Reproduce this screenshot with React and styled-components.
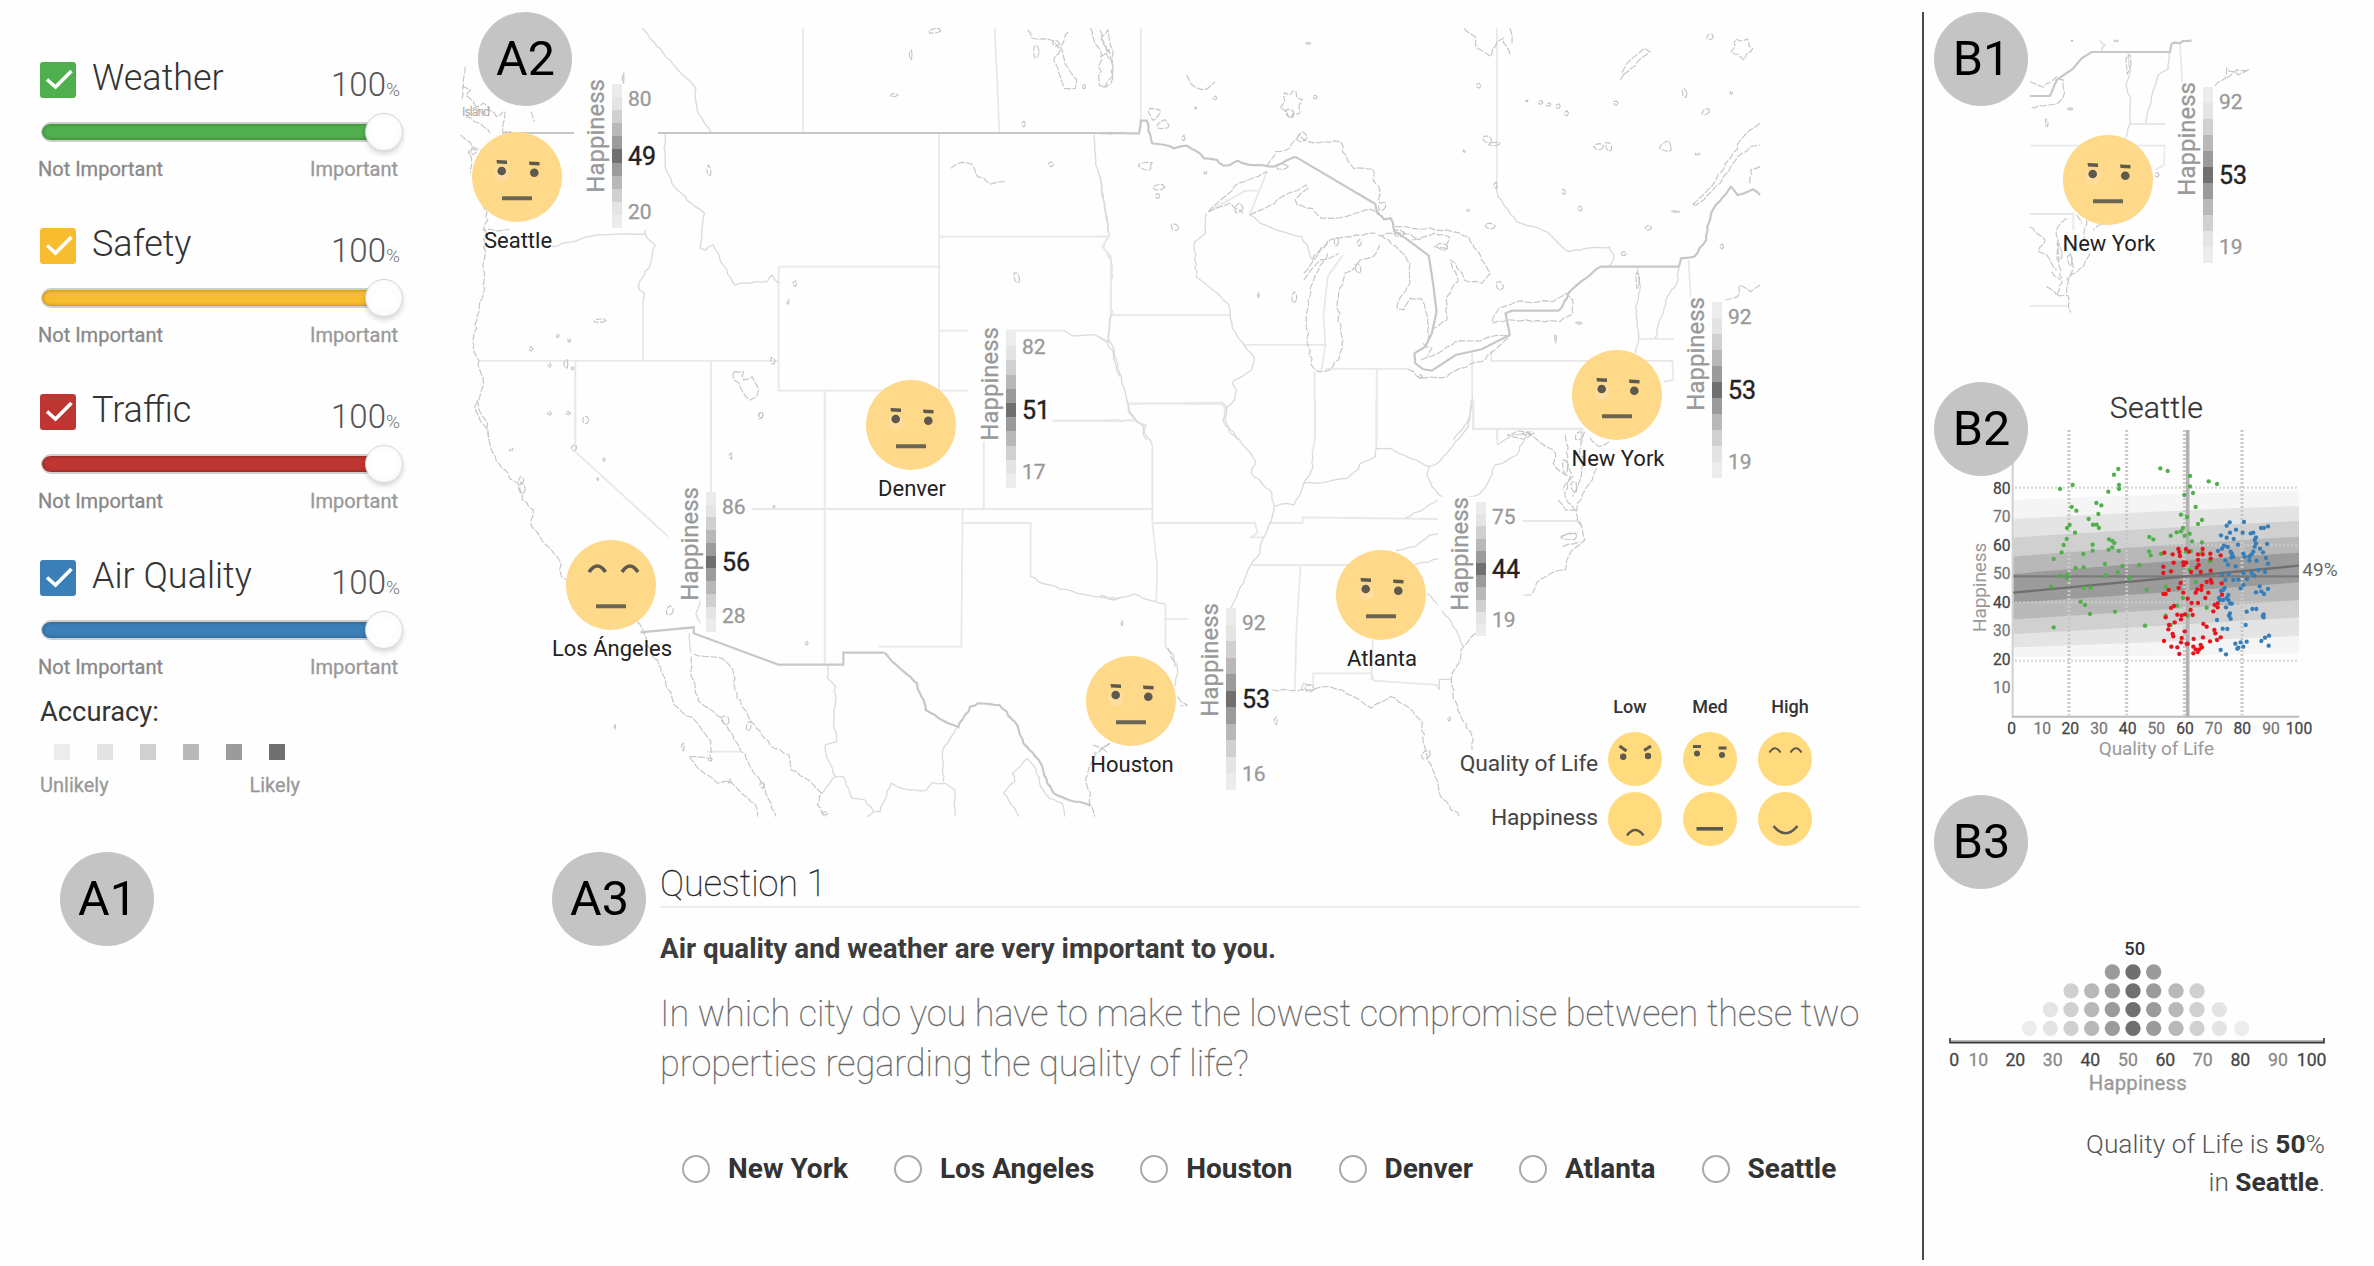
import React from "react";
import styled, { createGlobalStyle } from "styled-components";

const GlobalStyle = createGlobalStyle`
  * { box-sizing: border-box; }
  body {
    margin: 0;
    background: #fefefe;
    font-family: Roboto, "Liberation Sans", sans-serif;
    color: #333;
  }
  svg { display: block; }
`;

const SHADES = ["#ececec", "#e4e4e4", "#d0d0d0", "#b8b8b8", "#9b9b9b", "#707070"];
const SCALE = [0, 1, 2, 3, 4, 5, 4, 3, 2, 1, 0].map((i) => SHADES[i]);

/* ---------- page frame ---------- */

const Page = styled.div`
  position: relative;
  display: flex;
  width: 2374px;
  height: 1266px;
  overflow: hidden;
`;

const Sidebar = styled.aside`
  width: 440px;
  padding: 54px 40px 0;
`;

const Center = styled.main`
  display: flex;
  flex-direction: column;
  width: 1482px;
`;

const Aside = styled.section`
  display: flex;
  flex-direction: column;
  width: 452px;
  height: 1248px;
  margin-top: 12px;
  border-left: 2px solid #4a4a4a;
`;

const Badge = styled.div`
  position: absolute;
  left: ${(p) => p.$x - 47}px;
  top: ${(p) => p.$y - 47}px;
  display: flex;
  align-items: center;
  justify-content: center;
  width: 94px;
  height: 94px;
  padding-left: 1px;
  border-radius: 50%;
  background: #c4c4c4;
  color: #000;
  font-size: 48.5px;
  line-height: 94px;
`;

/* ---------- weights panel ---------- */

const Controls = styled.div`
  display: flex;
  flex-direction: column;
  gap: 39px;
`;

const Control = styled.div`
  height: 127px;
`;

const Head = styled.div`
  display: flex;
  align-items: flex-start;
  height: 56px;
`;

const Check = styled.span`
  width: 36px;
  height: 36px;
  margin: 8px 16px 0 0;
  border-radius: 3px;
  background: ${(p) => p.$color};
`;

const Name = styled.span`
  font-size: 36px;
  font-weight: 300;
  line-height: 48px;
  color: #333;
`;

const Value = styled.span`
  margin-left: auto;
  padding-top: 7px;
  font-size: 33px;
  font-weight: 300;
  line-height: 48px;
  color: #555;
  small {
    font-size: 19px;
    color: #777;
  }
`;

const Track = styled.div`
  position: relative;
  width: 360px;
  height: 20px;
  margin: 12px 0 0 1px;
  border: 2px solid #cfcfcf;
  border-left-width: 1px;
  border-radius: 10px;
  background: ${(p) => p.$color};
  box-shadow: inset 0 0 3px 1px rgba(0, 0, 0, 0.22);
`;

const Thumb = styled.span`
  position: absolute;
  right: -4px;
  top: -11px;
  width: 38px;
  height: 38px;
  border: 1px solid #d6d6d6;
  border-radius: 50%;
  background: radial-gradient(circle, #fff 40%, #f7f7f7 100%);
  box-shadow: 0 3px 5px rgba(0, 0, 0, 0.16);
`;

const Ends = styled.div`
  display: flex;
  justify-content: space-between;
  width: ${(p) => p.$width}px;
  margin: ${(p) => p.$top}px 0 0 ${(p) => p.$left || 0}px;
  font-size: 20px;
  line-height: 24px;
  color: #999;
  -webkit-text-stroke: 0.3px currentColor;
  span:first-child { color: ${(p) => p.$first || "#999"}; }
`;

const Accuracy = styled.h3`
  margin: 17px 0 0;
  font-size: 27.3px;
  font-weight: 400;
  line-height: 32px;
  color: #333;
`;

const Swatches = styled.div`
  display: flex;
  gap: 27px;
  margin: 16px 0 0 14px;
`;

const Swatch = styled.i`
  width: 16px;
  height: 16px;
  background: ${(p) => p.$color};
`;

const CONTROLS = [
  ["Weather", "#4fae4d"],
  ["Safety", "#f8bd2e"],
  ["Traffic", "#bd3632"],
  ["Air Quality", "#3a7fb7"],
];

function Weights() {
  return (
    <Sidebar>
      <Controls>
        {CONTROLS.map(([name, color]) => (
          <Control key={name}>
            <Head>
              <Check $color={color}>
                <svg width="36" height="36" viewBox="0 0 36 36">
                  <path d="M7 17.5 L15.5 25 L31.5 9" fill="none" stroke="#fff" strokeWidth="3.6" />
                </svg>
              </Check>
              <Name>{name}</Name>
              <Value>100<small>%</small></Value>
            </Head>
            <Track $color={color}><Thumb /></Track>
            <Ends $width={360} $top={15} $left={-2} $first="#888">
              <span>Not Important</span>
              <span>Important</span>
            </Ends>
          </Control>
        ))}
      </Controls>
      <Accuracy>Accuracy:</Accuracy>
      <Swatches>
        {SHADES.map((c) => <Swatch key={c} $color={c} />)}
      </Swatches>
      <Ends $width={260} $top={13}>
        <span>Unlikely</span>
        <span>Likely</span>
      </Ends>
    </Sidebar>
  );
}

/* ---------- map outlines ---------- */

function parse(points) {
  return points.split(" ").map((p) => p.split(",").map(Number));
}

function straight(points) {
  return "M" + points.split(" ").join("L");
}

/* Breaks a line into short steps and shifts each a little, as a shoreline does. */
function rough(points, amp = 5) {
  const pts = parse(points);
  let seed = Math.abs(pts[0][0] * 31 + pts[0][1] * 17) + 7;
  const rand = () => {
    seed = (seed * 1103515245 + 12345) % 2147483648;
    return seed / 2147483648 - 0.5;
  };
  let d = `M${pts[0][0]},${pts[0][1]}`;
  for (let i = 1; i < pts.length; i++) {
    const [x0, y0] = pts[i - 1];
    const [x1, y1] = pts[i];
    const n = Math.max(1, Math.round(Math.hypot(x1 - x0, y1 - y0) / 13));
    for (let k = 1; k <= n; k++) {
      const t = k / n;
      const j = k === n ? 0 : amp;
      d += `L${(x0 + (x1 - x0) * t + rand() * j).toFixed(1)},${(y0 + (y1 - y0) * t + rand() * j).toFixed(1)}`;
    }
  }
  return d;
}

function lake([x, y, w, h]) {
  let d = "";
  const n = Math.max(5, Math.round((w + h) / 7));
  for (let i = 0; i < n; i++) {
    const a = (i / n) * Math.PI * 2;
    const k = 0.5 * (1 - 0.4 * Math.abs(Math.sin(i * 2.3 + x)));
    d += `${i ? "L" : "M"}${(x + Math.cos(a) * w * k).toFixed(1)},${(y + Math.sin(a) * h * k).toFixed(1)}`;
  }
  return d + "Z";
}

const NORTHWEST = {
  state: [
    "837,85 837,397", "1279,85 1290,397", "1151,403 1151,1172", "1151,710 1543,710", "781,800 1151,800",
    "781,800 781,1172 1220,1172", "887,1172 887,1320", "89,1083 781,1083", "312,1083 312,1320",
    "625,1083 625,1320", "1151,992 1440,992", "1548,945 1568,945", "1412,1262 1568,1262", "468,910 468,1083",
  ],
  river: [
    "467,85 480,105 520,170 560,225 590,265 593,330 610,370 625,397",
    "519,403 519,500 540,560 580,610 610,640 603,700 600,745 612,750 630,735 650,790 680,855 690,850 755,845 765,825 781,850",
    "258,740 290,728 350,708 395,703 472,703",
    "472,690 478,715 496,735 485,790 460,845 460,870 472,880 468,910",
    "1509,403 1512,480 1525,560 1535,650 1543,700 1530,745 1548,780 1548,945 1543,1000 1540,1030",
    "1440,992 1460,1008 1510,1005 1530,1020 1550,1050 1560,1110 1568,1130",
  ],
  coast: [
    "58,200 55,230 50,300", "75,325 100,310 130,350 145,335", "50,260 70,270 60,285 100,345",
    "60,350 100,380 115,400", "150,335 145,400", "210,335 218,365", "48,405 75,440 95,450", "75,440 70,520",
    "100,610 110,660 100,690 160,690", "103,690 100,880 85,960 78,1010 80,1060 90,1083",
    "90,1083 92,1110 100,1150 92,1190 80,1220 90,1250 110,1290 113,1320",
    "1178,505 1200,488 1225,492 1240,530 1270,552 1302,545",
    "678,1115 700,1115 700,1140 720,1130 735,1170 730,1190 715,1200 700,1180 690,1150 678,1140 678,1115",
    "1355,90 1365,115 1410,120 1430,150 1415,180 1440,265 1465,265 1468,240 1440,190 1430,140 1450,95",
    "1500,85 1510,130 1525,165 1520,255 1535,262 1550,230 1552,150 1540,90 1525,120 1545,160",
  ],
  border: ["150,399 1568,399"],
  shore: [],
  lakes: [
    [1140, 93, 34, 20], [1085, 165, 10, 35], [1048, 285, 24, 14], [1375, 155, 20, 45], [1345, 373, 12, 20],
    [620, 513, 14, 36], [1408, 493, 18, 18], [1330, 833, 18, 40], [818, 850, 14, 22], [802, 905, 8, 16],
    [370, 962, 34, 16], [272, 1007, 8, 16], [298, 1022, 8, 16], [210, 1047, 10, 20], [252, 1095, 10, 14],
    [290, 1092, 14, 30], [305, 1105, 8, 14], [767, 1083, 14, 26], [740, 1245, 16, 26], [252, 1240, 12, 12],
    [295, 1240, 14, 14], [336, 1260, 16, 36], [422, 235, 6, 36], [75, 455, 24, 26],
    [1485, 260, 10, 20], [1420, 130, 18, 30], [155, 400, 30, 12],
  ],
};

const NORTHEAST = {
  state: [
    "94,85 94,360", "915,85 915,545", "345,645 385,515", "250,635 335,572 365,572", "25,945 300,945",
    "0,710 20,710 5,740 25,770 25,945", "65,1212 275,1208 290,1225", "330,1035 520,1035", "495,1115 495,1320",
    "638,1107 638,1320", "520,1107 710,1107", "858,1060 858,1190", "861,1200 861,1286 1110,1286 1110,1320",
    "902,1050 902,1083 1320,1083 1322,1140 1300,1145", "915,1286 915,1320", "1242,1017 1325,1017",
    "1357,780 1362,895", "560,765 525,830 515,950 520,1035 510,1115",
  ],
  river: [
    "915,545 918,590 960,665 1000,680 1030,695 1050,720 1080,755 1120,745 1175,742 1185,775 1175,798",
    "245,640 243,700 218,725 222,830 260,870 295,910 300,945 305,985 330,1030 355,1070 350,1110 320,1135 305,1150 315,1170 310,1200 290,1225 283,1260 300,1300 318,1320",
    "345,645 370,670 420,695 465,710 480,745 490,780", "0,530 8,600 20,700",
    "25,945 18,1010 30,1040 45,1120 60,1190 68,1240 85,1262 100,1280 100,1305 108,1320",
    "0,1015 18,1025", "858,1190 855,1230 845,1270 815,1320",
    "1240,800 1245,870 1235,920 1242,1000 1242,1017 1235,1060", "1335,800 1330,850 1308,890 1295,950 1280,1015",
    "0,1262 85,1262",
  ],
  coast: [
    "840,85 865,110 870,145 900,170 915,125 930,115 945,165", "945,85 950,130",
    "385,500 405,455 430,450 460,405 480,425 555,425 570,480 585,505 630,508 630,540 645,570 645,610",
    "250,635 320,550 385,515", "250,635 300,610 330,640",
    "345,645 380,625 420,590 475,555 480,565 450,600 455,615 490,625 510,655 540,655 580,645 625,628 645,640",
    "490,780 530,720 590,705 635,700", "470,840 500,790 550,760", "470,820 505,760 525,720",
    "525,760 495,830 480,900 475,960 480,1040 490,1100 505,1115 530,1110 550,1080 560,1020 550,950 550,890 565,820 590,800 600,780 630,770 645,735",
    "645,705 690,750 715,790 715,850 690,900 685,925 700,930 715,895 740,895 750,930 758,980 755,1030",
    "680,680 720,685 800,690 850,710 880,780 900,820 880,850 840,840 820,790 808,780 825,845 800,890 800,960 770,985",
    "720,720 770,700 805,710 800,745 770,740", "640,705 700,700 740,720",
    "710,1108 740,1135 800,1130 830,1105 880,1085 910,1050 945,1010",
    "740,1080 780,1060 820,1025 880,1022 920,1005 945,1005", "745,1030 765,1045 755,1070",
    "905,965 920,925 960,905 1045,905 1075,880 1090,900 1090,940 1060,965 1010,962 940,960 905,970",
    "1522,370 1490,400 1450,480 1410,560 1365,615 1375,615 1430,550 1470,470 1500,440 1522,435",
    "1522,500 1500,510 1498,550", "1442,900 1470,890 1475,855 1500,875 1522,855",
    "1200,240 1215,190 1255,145 1268,155 1225,205 1205,225", "0,90 15,160 30,200 25,250 5,262", "0,170 20,150 30,190",
    "200,225 220,262 245,268 265,245",
  ],
  border: [],
  shore: [
    "0,400 90,400 94,362 108,362 120,430 150,435 170,445 200,437 230,460 240,475 270,480 285,497 300,495 318,482 340,493 400,500 420,490 450,470",
    "635,612 640,640 655,658 670,655 680,695 705,715",
    "1058,932 1080,880 1120,835 1155,800", "1335,800 1340,775 1370,770 1398,720 1400,680 1415,625 1455,560 1470,585 1505,568 1522,585",
  ],
  lines: [
    "450,470 635,612", "705,715 758,767 768,850 776,935 765,1000 750,1040 725,1060 727,1090 745,1108 765,1112 820,1065 880,1048 945,1005 935,940 950,932 1058,932",
    "1155,800 1335,800",
  ],
  lakes: [
    [480, 130, 14, 8], [265, 293, 14, 14], [221, 323, 8, 8], [442, 312, 56, 96], [438, 340, 26, 36], [496, 292, 12, 16],
    [873, 258, 12, 22], [1480, 145, 56, 72], [1407, 110, 18, 28], [1348, 280, 12, 40], [1190, 310, 12, 20],
    [1015, 308, 14, 14], [1035, 313, 14, 14], [1057, 318, 14, 20], [985, 302, 8, 6], [1075, 340, 14, 18],
    [1397, 335, 24, 24], [1455, 278, 8, 12], [893, 418, 26, 30], [910, 432, 36, 14], [1150, 440, 24, 30],
    [1173, 440, 20, 34], [1305, 440, 34, 40], [1378, 462, 14, 8], [1070, 575, 10, 24], [1107, 625, 16, 20],
    [850, 630, 10, 10], [900, 678, 36, 20], [1265, 683, 20, 22], [1208, 760, 18, 18], [1433, 740, 12, 18],
    [922, 857, 26, 30], [448, 893, 18, 36], [365, 885, 6, 16], [105, 498, 38, 34], [135, 562, 30, 26], [134, 588, 14, 22],
    [173, 682, 20, 30], [243, 517, 10, 12], [125, 340, 36, 44], [145, 375, 34, 34], [1103, 970, 22, 8],
    [1050, 1015, 6, 32], [597, 730, 12, 26], [840, 452, 8, 12], [1328, 635, 26, 6], [465, 412, 26, 40], [420, 500, 44, 20],
    [1240, 840, 12, 60], [192, 415, 10, 20], [738, 1130, 12, 16], [545, 725, 16, 30], [595, 805, 20, 36], [970, 1305, 70, 28],
    [1105, 1308, 26, 30], [912, 555, 12, 22], [650, 620, 20, 36], [690, 700, 40, 24], [320, 625, 26, 34], [790, 740, 36, 26],
  ],
};

const SOUTHWEST = {
  state: [
    "312,0 312,150", "625,0 625,277", "887,0 887,790", "312,155 528,412", "720,327 1568,327", "1254,125 1254,325",
    "1205,327 1202,740 1012,740", "1202,369 1362,369 1362,530", "615,1055 690,1055", "1412,62 1568,62",
  ],
  river: [
    "1362,530 1380,545 1420,560 1470,580 1510,590 1568,595", "575,700 578,760", "600,600 590,640 600,670",
    "895,795 893,835 912,860 908,960 915,1025 888,1035 895,1080 912,1130 880,1180",
    "912,1130 930,1130 950,1195 980,1200 1000,1235 1015,1235 1040,1150 1080,1170 1120,1172 1135,1148 1165,1150 1187,1170 1187,1250",
    "1190,985 1160,1050 1160,1145", "1355,1075 1320,1120 1325,1145 1300,1180 1335,1250",
    "1355,1075 1375,1110 1385,1160 1405,1195 1435,1210 1440,1250", "1000,1235 985,1250",
  ],
  coast: [
    "85,0 90,30 110,70 113,120 120,155 160,235 180,250 190,300 215,330 210,375 240,430 275,480 280,530 300,545",
    "455,665 470,700 490,760 520,840 540,915 590,965 625,1025 625,1080",
    "580,770 580,830 595,900 650,955 690,1040 720,1110 750,1170 775,1250",
    "585,762 620,770 650,775 675,810 680,870 700,925 730,985 770,1045 805,1065 810,1110 850,1140 880,1180 870,1215 890,1250",
    "575,1070 620,1075", "575,1072 600,1110 640,1150 670,1145 700,1185 725,1210 732,1250",
    "1545,1030 1510,1060 1495,1110 1490,1150 1500,1180 1500,1215 1510,1250", "1505,1035 1540,1060",
  ],
  border: ["462,697 585,682 585,700 780,794 930,794 930,758 1025,758"],
  shore: [
    "1025,758 1060,805 1100,850 1120,930 1150,955 1195,982 1222,920 1240,910 1290,915 1325,965 1345,1030 1385,1090 1400,1150 1415,1180 1450,1200 1500,1217",
  ],
  lakes: [
    [530, 632, 24, 34], [712, 978, 16, 36], [403, 978, 4, 16], [560, 1040, 10, 26], [742, 1155, 14, 26], [658, 960, 26, 34],
    [670, 167, 10, 22], [740, 45, 14, 26], [310, 143, 16, 28], [378, 177, 8, 14], [364, 238, 6, 10], [165, 148, 12, 12],
    [190, 265, 20, 36], [188, 240, 14, 30], [845, 730, 8, 16], [770, 320, 6, 8], [623, 1078, 14, 12], [668, 1143, 8, 20], [888, 1240, 20, 16],
  ],
};

const SOUTHEAST = {
  state: [
    "0,62 75,62", "108,135 108,368 112,420 118,500 116,605", "0,327 108,327", "60,10 250,12", "444,0 444,110 438,160",
    "570,0 570,145", "770,0 770,87 995,87 995,130", "820,90 820,135", "108,369 320,369 325,400 310,412 338,412",
    "350,369 418,369 418,352 700,357", "872,363 990,363", "315,495 540,495", "414,495 405,700 402,870",
    "135,612 135,740", "135,657 185,657", "440,860 440,820 560,820 565,842 695,855 700,870", "563,720 560,840",
  ],
  river: [
    "55,0 60,25 75,65 95,75 92,100 108,135", "250,5 262,20 258,60 280,110 305,150 320,180 312,220 350,270 360,320",
    "360,320 385,310 400,315 410,290 420,250 470,245 510,235 545,185 568,170 570,145 600,145 640,175 680,200",
    "438,160 440,200 420,250", "765,0 760,80 715,160 700,185 680,200 675,220 685,260 705,290 670,325 630,355",
    "820,135 850,105 880,105 860,165 830,190 815,195 800,250 780,285 760,290",
    "360,320 350,370 335,420 325,470 305,510 290,560 275,610 270,625", "610,452 650,440 680,405 700,400",
    "650,493 700,475", "0,585 30,600 70,582 100,600 135,612", "135,740 150,760 160,810 155,860",
    "675,580 700,620 735,690 750,740", "700,870 700,838 725,838", "415,870 420,850 440,855",
  ],
  coast: [
    "880,95 910,130 940,160 935,190 950,215 970,230 960,290 980,330", "1000,95 990,150 1000,190 990,240 975,290",
    "960,105 965,170 975,230 955,270", "1050,125 1030,140 1010,110", "1025,205 1010,250 985,310 985,365 995,385",
    "945,300 960,330 985,330", "775,700 750,740 740,790 725,830 728,880 745,950 770,1020 768,1050",
    "990,365 1000,420 970,460 960,510 930,520 900,550 890,585 872,585", "950,410 985,400", "955,440 990,425",
    "355,870 440,870 460,860 500,870 530,895 560,925 600,890 635,920 665,965 670,1040 675,1080 690,1120 700,1180 720,1215 742,1250",
    "160,890 180,915 165,918", "0,1050 20,1030", "140,745 155,800",
  ],
  border: [],
  shore: [],
  lakes: [
    [362, 962, 10, 26], [720, 957, 8, 16], [45, 668, 6, 18], [672, 1065, 22, 36], [432, 865, 30, 24], [960, 200, 16, 50],
    [978, 260, 14, 50], [885, 100, 30, 14], [968, 410, 36, 30],
  ],
};

const NEW_YORK = {
  state: [
    "390,437 795,437 792,495 765,510", "390,642 520,642 520,690", "390,918 505,918", "690,372 800,372", "840,130 847,255",
  ],
  river: [
    "685,160 690,220 678,255 690,290 690,372 678,412", "808,156 805,205 775,225 755,290 738,370",
    "600,122 615,135 605,152",
  ],
  coast: [
    "390,245 430,262 470,230 490,240 490,290 470,312 430,318 390,323", "945,258 975,235 980,205 1015,225 1050,205",
    "980,235 1010,210 1040,212", "530,645 545,670", "500,655 470,690 475,760 485,850 470,885 505,888 505,920 512,938",
    "570,760 550,800 510,830 500,880", "510,760 520,800 500,840", "390,680 435,720 415,755 440,765 470,810",
    "605,672 580,690", "440,860 470,885", "455,815 480,840", "560,660 550,720",
  ],
  border: ["390,288 450,288 470,240 520,205 545,175 575,156 810,156 815,130"],
  shore: ["815,130 875,122"],
  lakes: [
    [510, 326, 30, 8], [440, 370, 10, 30], [685, 190, 18, 70], [770, 525, 18, 16], [648, 122, 18, 6], [517, 122, 8, 4],
    [478, 760, 20, 60], [510, 780, 16, 50],
  ],
};

const Strokes = styled.g`
  fill: none;
  path { vector-effect: non-scaling-stroke; }
  .state { stroke: #e8e8e8; stroke-width: 1.8; }
  .river { stroke: #dadada; stroke-width: 1.3; }
  .coast { stroke: #c6c8c8; stroke-width: 1.2; stroke-dasharray: 7 1.5; }
  .lake { stroke: #bfc4c4; stroke-width: 1.1; stroke-dasharray: 6 1.5; }
  .border { stroke: #c6c8c7; stroke-width: 2.2; }
`;

function Outline({ data, at }) {
  return (
    <Strokes transform={at}>
      {data.state.map((p) => <path key={p} className="state" d={straight(p)} />)}
      {data.river.map((p) => <path key={p} className="river" d={rough(p)} />)}
      {data.coast.map((p) => <path key={p} className="coast" d={rough(p, 7)} />)}
      {data.lakes.map((l) => <path key={l.join()} className="lake" d={lake(l)} />)}
      {[...data.border, ...(data.lines || [])].map((p) => <path key={p} className="border" d={straight(p)} />)}
      {data.shore.map((p) => <path key={p} className="border" d={rough(p)} />)}
    </Strokes>
  );
}

/* ---------- faces ---------- */

const INK = "#5d594c";

function Eyes({ mood, small }) {
  const line = { fill: "none", stroke: INK, strokeWidth: small ? 2.2 : 3.6 };
  if (mood === "high") {
    return small ? (
      <g {...line}>
        <path d="M-15.5 -6.5 Q-10 -15 -4.5 -6.5" />
        <path d="M5.5 -6.5 Q11 -15 16.5 -6.5" />
      </g>
    ) : (
      <g {...line}>
        <path d="M-22 -13 Q-13.5 -25 -5.5 -13" />
        <path d="M11 -13 Q19 -25 27 -13" />
      </g>
    );
  }
  if (mood === "low") {
    return (
      <g {...line}>
        <path strokeWidth="3" d="M-15.5 -13 L-8.5 -8" />
        <path strokeWidth="3" d="M16 -13 L9 -8.5" />
        <circle cx="-11.8" cy="-2.3" r="3.2" fill={INK} stroke="none" />
        <circle cx="13" cy="-3" r="3.2" fill={INK} stroke="none" />
      </g>
    );
  }
  return small ? (
    <g fill={INK}>
      <rect x="-17" y="-14" width="8" height="3" />
      <rect x="8.5" y="-12.5" width="8" height="3" />
      <circle cx="-13" cy="-5.5" r="3" />
      <circle cx="12" cy="-4" r="3" />
    </g>
  ) : (
    <g fill={INK}>
      <ellipse cx="-15" cy="-3" rx="7.5" ry="8" fill="#ffdca0" />
      <path d="M-20.5 -17 L-10 -16.5 V-13 L-20 -13.5Z" />
      <path d="M12 -15.5 L22.5 -15 V-11.5 L12.5 -12Z" />
      <circle cx="-15.3" cy="-6" r="4.3" />
      <circle cx="17.3" cy="-4.3" r="4.3" />
    </g>
  );
}

function Mouth({ mood, small }) {
  if (mood === "low") return <path d="M-8 16.5 Q0.3 5.5 8.5 16.5" fill="none" stroke={INK} strokeWidth="2.4" />;
  if (mood === "high") return <path d="M-11.5 7 Q0.5 21.5 12.5 7" fill="none" stroke={INK} strokeWidth="2.6" />;
  return small
    ? <rect x="-13.5" y="8" width="26.5" height="3.6" fill={INK} />
    : <rect x="-15" y="19.2" width="30" height="4" rx="0.5" fill="#6a6553" />;
}

function Face({ eyes, mouth, small }) {
  const size = small ? 54 : 90;
  const r = size / 2;
  return (
    <svg width={size} height={size} viewBox={`${-r} ${-r} ${size} ${size}`}>
      <circle r={r} fill={small ? "#ffdb7e" : "#fed98a"} />
      {eyes && <Eyes mood={eyes} small={small} />}
      {mouth && <Mouth mood={mouth} small={small} />}
    </svg>
  );
}

/* ---------- map ---------- */

const MapStage = styled.div`
  position: relative;
  height: 840px;
`;

const City = styled.div`
  position: absolute;
  left: ${(p) => p.$x - 100}px;
  top: ${(p) => p.$y - 45}px;
  display: flex;
  flex-direction: column;
  align-items: center;
  width: 200px;
`;

const CityName = styled.span`
  margin: 7px 0 0 2px;
  font-size: 22px;
  line-height: 24px;
  color: #222;
`;

const Gauge = styled.div`
  position: absolute;
  left: ${(p) => p.$x - 38}px;
  top: ${(p) => p.$top}px;
  display: flex;
  width: 84px;
  height: ${(p) => p.$height}px;
`;

const GaugeTitle = styled.span`
  align-self: flex-start;
  width: 38px;
  margin-top: -5px;
  padding-right: 7px;
  writing-mode: vertical-rl;
  transform: rotate(180deg);
  font-size: 24px;
  line-height: 31px;
  white-space: nowrap;
  background: #fefefe;
  color: #999;
  -webkit-text-stroke: 0.3px #999;
`;

const GaugeBar = styled.div`
  display: flex;
  flex-direction: column;
  width: 10px;
`;

const GaugeStep = styled.i`
  flex: 1;
  background: ${(p) => p.$color};
`;

const GaugeValues = styled.div`
  display: flex;
  flex-direction: column;
  flex: 1;
  justify-content: space-between;
  padding: 2px 0 3px 6px;
  background: #fefefe;
  font-size: 21px;
  line-height: 26px;
  color: #999;
  -webkit-text-stroke: 0.3px currentColor;
  b {
    padding-top: 2px;
    font-size: 25px;
    font-weight: 400;
    color: #222;
    -webkit-text-stroke: 0.4px #222;
  }
`;

function CityMarker({ name, x, y, eyes, gx, top, bottom, values, dx = 0, dy = 0 }) {
  return (
    <>
      <Gauge $x={gx - dx} $top={top - dy} $height={bottom - top}>
        <GaugeTitle>Happiness</GaugeTitle>
        <GaugeBar>{SCALE.map((c, i) => <GaugeStep key={i} $color={c} />)}</GaugeBar>
        <GaugeValues>
          <span>{values[0]}</span>
          <b>{values[1]}</b>
          <span>{values[2]}</span>
        </GaugeValues>
      </Gauge>
      <City $x={x - dx} $y={y - dy}>
        <Face eyes={eyes} mouth="med" />
        <CityName>{name}</CityName>
      </City>
    </>
  );
}

const CITIES = [
  { name: "Seattle", x: 517, y: 177, eyes: "med", gx: 612, top: 84, bottom: 228, values: [80, 49, 20] },
  { name: "Denver", x: 911, y: 425, eyes: "med", gx: 1006, top: 332, bottom: 488, values: [82, 51, 17] },
  { name: "Los Ángeles", x: 611, y: 585, eyes: "high", gx: 706, top: 492, bottom: 632, values: [86, 56, 28] },
  { name: "Houston", x: 1131, y: 701, eyes: "med", gx: 1226, top: 608, bottom: 790, values: [92, 53, 16] },
  { name: "Atlanta", x: 1381, y: 595, eyes: "med", gx: 1476, top: 502, bottom: 636, values: [75, 44, 19] },
  { name: "New York", x: 1617, y: 395, eyes: "med", gx: 1712, top: 302, bottom: 478, values: [92, 53, 19] },
];

const Legend = styled.div`
  position: absolute;
  left: 1010px;
  top: 696px;
  display: grid;
  grid-template-columns: 137px 54px 54px 54px;
  grid-template-rows: 30px 54px 54px;
  column-gap: 21px;
  row-gap: 6px;
  align-items: center;
`;

const LegendHead = styled.span`
  position: relative;
  left: ${(p) => p.$shift}px;
  justify-self: center;
  align-self: start;
  font-size: 18px;
  font-weight: 500;
  line-height: 21px;
  color: #333;
`;

const LegendName = styled.span`
  justify-self: end;
  margin: ${(p) => p.$top}px -11px 0 0;
  font-size: 22.8px;
  line-height: 26px;
  letter-spacing: -0.1px;
  white-space: nowrap;
  color: #444;
`;

function CityMap() {
  return (
    <MapStage>
      <svg width="1482" height="840" viewBox="0 0 1482 840">
        <Outline data={NORTHWEST} at="scale(.4337 .3333)" />
        <Outline data={NORTHEAST} at="translate(660 0) scale(.4337 .3333)" />
        <Outline data={SOUTHWEST} at="translate(0 400) scale(.4337 .3333)" />
        <Outline data={SOUTHEAST} at="translate(660 400) scale(.4847 .3333)" />
        <text x="22" y="116" fontSize="12" fill="#aaa" textLength="28">Island</text>
      </svg>
      {CITIES.map((c) => <CityMarker key={c.name} {...c} dx={440} />)}
      <Legend>
        <span />
        <LegendHead $shift={-5}>Low</LegendHead>
        <LegendHead $shift={0}>Med</LegendHead>
        <LegendHead $shift={5}>High</LegendHead>
        <LegendName $top={9}>Quality of Life</LegendName>
        <Face small eyes="low" />
        <Face small eyes="med" />
        <Face small eyes="high" />
        <LegendName $top={-2}>Happiness</LegendName>
        <Face small mouth="low" />
        <Face small mouth="med" />
        <Face small mouth="high" />
      </Legend>
    </MapStage>
  );
}

/* ---------- question ---------- */

const Question = styled.section`
  width: 1440px;
  padding: 24px 20px 0 220px;
`;

const QuestionTitle = styled.h2`
  width: 1200px;
  height: 44px;
  margin: 0;
  border-bottom: 2px solid #e8efee;
  font-size: 36px;
  font-weight: 100;
  line-height: 41px;
  color: #222;
  -webkit-text-stroke: 0.3px #222;
`;

const Premise = styled.p`
  margin: 25px 0 0;
  font-size: 27.8px;
  font-weight: 700;
  line-height: 32px;
  color: #3c3c3c;
`;

const Prompt = styled.p`
  width: 1215px;
  margin: 24px 0 0;
  font-size: 36.03px;
  font-weight: 100;
  line-height: 50px;
  white-space: nowrap;
  color: #666;
  -webkit-text-stroke: 0.3px #666;
`;

const Options = styled.div`
  display: flex;
  gap: 46px;
  margin: 66px 0 0 22px;
`;

const Option = styled.label`
  display: flex;
  align-items: center;
  gap: 18px;
  height: 28px;
  font-size: 28px;
  font-weight: 700;
  line-height: 26px;
  white-space: nowrap;
  color: #333;
`;

const Radio = styled.i`
  width: 28px;
  height: 28px;
  border: 2px solid #aaa;
  border-radius: 50%;
  background: #fff;
`;

function QuestionBlock() {
  return (
    <Question>
      <QuestionTitle>Question 1</QuestionTitle>
      <Premise>Air quality and weather are very important to you.</Premise>
      <Prompt>
        In which city do you have to make the lowest compromise between these two
        <br />
        properties regarding the quality of life?
      </Prompt>
      <Options>
        {["New York", "Los Angeles", "Houston", "Denver", "Atlanta", "Seattle"].map((c) => (
          <Option key={c}><Radio />{c}</Option>
        ))}
      </Options>
    </Question>
  );
}

/* ---------- right column ---------- */

const CloseUp = styled.div`
  position: relative;
  height: 358px;
`;

const ChartBox = styled.div`
  height: ${(p) => p.$height}px;
`;

const GREEN = "655,297 642,314 781,295 803,303 480,357 518,345 657,345 657,357 625,365 870,318 870,349 926,334 951,342 879,369 853,375 515,411 529,422 589,399 604,406 595,432 566,447 579,464 590,464 597,474 509,465 501,474 525,488 500,507 491,525 485,547 461,567 550,552 578,524 578,542 627,508 637,513 643,519 637,532 626,539 656,543 615,582 667,588 653,607 618,616 687,625 718,585 527,594 551,592 481,617 502,613 501,625 453,650 552,653 572,653 542,695 555,705 570,732 645,725 461,772 735,767 740,659 748,501 760,508 747,544 752,556 783,552 812,497 830,487 843,484 849,474 854,497 869,491 843,434 861,441 887,411 906,450 894,462 876,514 906,517 873,543 907,548 930,574 887,636 849,684 831,707 920,713 797,737 863,737 812,765 797,650 868,600 858,545";
const RED = "793,548 818,553 835,537 838,546 858,537 840,558 867,545 894,553 908,537 908,553 931,551 932,566 962,556 821,578 850,577 851,586 859,578 894,570 896,585 790,590 790,609 813,604 873,606 890,593 902,606 932,602 842,639 836,654 850,668 797,672 806,660 887,668 892,658 905,648 904,660 920,636 932,630 935,638 925,668 916,684 966,674 863,686 875,699 894,699 822,708 813,714 944,705 953,712 940,724 872,720 878,735 797,742 832,734 845,736 855,733 843,748 824,757 807,765 805,778 854,784 910,762 920,770 943,780 946,790 818,792 820,799 792,813 845,804 881,807 909,802 962,802 951,810 930,814 843,817 814,830 832,832 863,821 880,830 887,838 902,825 906,832 880,850 893,846 838,852 860,822 898,838 965,640 790,672 953,700";
const BLUE = "989,457 1032,456 980,467 990,488 1008,479 963,496 980,503 1001,507 1014,524 1028,488 1052,490 1060,488 1068,502 1064,510 1083,474 1092,474 1104,469 1101,522 1068,520 1064,530 1080,536 1089,547 972,527 966,536 983,531 954,543 992,545 996,552 994,562 1030,551 1034,560 1048,559 1055,553 1048,571 1070,572 1098,564 1104,581 976,571 984,584 1007,589 1095,606 1055,609 1063,617 967,614 986,613 976,630 1000,630 1015,629 1041,627 1030,645 1022,655 1079,649 1104,657 1068,667 1084,664 1092,672 963,663 985,675 974,654 957,684 970,690 980,684 990,700 978,712 987,737 992,746 951,750 1040,725 1057,717 1069,717 1091,733 1091,742 968,776 982,777 1037,765 962,840 978,853 1006,821 1022,817 1030,830 1012,836 1040,815 1084,813 1095,803 1107,797 1106,827 990,730 1000,560 1075,600 1088,738 1030,610 1060,545 960,690 970,660 985,690 995,701 1015,833";

const BANDS = [
  ["#f5f5f5", 390, 362, 862, 850],
  ["#e4e4e4", 447, 408, 832, 798],
  ["#d0d0d0", 503, 453, 792, 742],
  ["#b8b8b8", 560, 500, 748, 690],
  ["#9b9b9b", 612, 548, 698, 637],
];

function Dots({ at, color }) {
  return parse(at).map(([x, y], i) => <circle key={i} cx={x} cy={y} r="6.5" fill={color} />);
}

function Scatter() {
  return (
    <svg width="450" height="410" viewBox="72 0 1350 1230" fontFamily="Roboto">
      {BANDS.map(([c, l1, r1, l2, r2]) => (
        <path
          key={c}
          fill={c}
          d={`M340 ${l1} Q770 ${(l1 + r1) / 2 - 6} 1197 ${r1} V${r2} Q770 ${(l2 + r2) / 2 + 3} 340 ${l2}Z`}
        />
      ))}
      <g stroke="#c8c8c8" strokeWidth="9" strokeDasharray="6 6">
        {[507, 680, 853, 1026].map((x) => <path key={x} d={`M${x} 180 V1036`} />)}
      </g>
      <g stroke="#cfcfcf" strokeWidth="7" strokeDasharray="6 6" opacity="0.8">
        {[353, 525, 697, 872].map((y) => <path key={y} d={`M345 ${y} H1197`} />)}
      </g>
      <path d="M338 270 V1040" stroke="#d0d0d0" strokeWidth="6" />
      <path d="M335 1040 H1198" stroke="#bdbdbd" strokeWidth="6" />
      <path d="M863 180 V1040" stroke="#b2b2b2" strokeWidth="11" />
      <path d="M340 619 H1197" stroke="#7b7b7b" strokeWidth="7" />
      <path d="M340 668 L1197 587" stroke="#6f6f6f" strokeWidth="7" />
      <Dots at={GREEN} color="#4fb04a" />
      <Dots at={RED} color="#e8141c" />
      <Dots at={BLUE} color="#377eb8" />
      <text x="629" y="145" fontSize="91" fontWeight="300" fill="#333" stroke="#333" strokeWidth="0.8" textLength="280">Seattle</text>
      <g fontSize="47" textAnchor="end" strokeWidth="0.8">
        {[80, 70, 60, 50, 40, 30, 20, 10].map((v, i) => (
          <text key={v} x="332" y={371 + i * 85.5} fill={i % 2 ? "#777" : "#444"} stroke={i % 2 ? "#777" : "#444"}>{v}</text>
        ))}
      </g>
      <g fontSize="47" textAnchor="middle" strokeWidth="0.8">
        {[335, 427, 511, 597, 683, 769, 855, 941, 1027, 1113, 1197].map((x, i) => (
          <text key={x} x={x} y="1091" fill={i % 2 ? "#777" : "#444"} stroke={i % 2 ? "#777" : "#444"}>{i * 10}</text>
        ))}
      </g>
      <text x="769" y="1154" fontSize="57" textAnchor="middle" fill="#999" textLength="346">Quality of Life</text>
      <text transform="translate(258 652) rotate(-90)" fontSize="57" textAnchor="middle" fill="#999" textLength="268">Happiness</text>
      <text x="1207" y="617" fontSize="57" fill="#666">49%</text>
    </svg>
  );
}

const COLUMNS = [
  [388, 1], [451, 2], [513, 3], [575, 3], [637, 4], [699, 4], [761, 4], [828, 3], [891, 3], [958, 2], [1025, 1],
];

function DotPlot() {
  return (
    <svg width="450" height="320" viewBox="72 0 1350 960" fontFamily="Roboto">
      {COLUMNS.map(([x, n], i) =>
        Array.from({ length: n }, (_, k) => (
          <circle key={`${x}-${k}`} cx={x} cy={745 - k * 56.3} r="23" fill={SCALE[i]} />
        ))
      )}
      <path d="M150 783 H1272" stroke="#bbb" strokeWidth="6" />
      <path d="M150 774 V788 H1272 V774" fill="none" stroke="#3a3a3a" strokeWidth="5" />
      <g fontSize="53" textAnchor="middle" strokeWidth="0.8">
        {[163, 235, 346, 458, 571, 684, 796, 908, 1021, 1134, 1235].map((x, i) => (
          <text key={x} x={x} y="857" fill={i % 2 ? "#888" : "#444"} stroke={i % 2 ? "#888" : "#444"}>{i * 10}</text>
        ))}
      </g>
      <text x="704" y="524" fontSize="55" fontWeight="500" textAnchor="middle" fill="#333">50</text>
      <text x="713" y="930" fontSize="61" textAnchor="middle" fill="#999" stroke="#999" textLength="294">Happiness</text>
    </svg>
  );
}

const Summary = styled.p`
  margin: 25px 49px 0 0;
  text-align: right;
  font-size: 26.3px;
  font-weight: 300;
  line-height: 38px;
  color: #555;
  b {
    font-weight: 700;
    color: #333;
  }
`;

export default function App() {
  return (
    <Page>
      <GlobalStyle />
      <Weights />
      <Center>
        <CityMap />
        <QuestionBlock />
      </Center>
      <Aside>
        <CloseUp>
          <svg width="450" height="358" viewBox="0 12 450 358">
            <Outline data={NEW_YORK} at="translate(-24 0) scale(.3333 .3333)" />
          </svg>
          <CityMarker
            name="New York" x={2108} y={180} eyes="med" gx={2203} top={87} bottom={263}
            values={[92, 53, 19]} dx={1924} dy={12}
          />
        </CloseUp>
        <ChartBox $height={410}><Scatter /></ChartBox>
        <ChartBox $height={320}><DotPlot /></ChartBox>
        <Summary>
          Quality of Life is <b>50</b>%<br />in <b>Seattle</b>.
        </Summary>
      </Aside>
      <Badge $x={107} $y={899}>A1</Badge>
      <Badge $x={525} $y={59}>A2</Badge>
      <Badge $x={599} $y={899}>A3</Badge>
      <Badge $x={1981} $y={59}>B1</Badge>
      <Badge $x={1981} $y={429}>B2</Badge>
      <Badge $x={1981} $y={842}>B3</Badge>
    </Page>
  );
}
